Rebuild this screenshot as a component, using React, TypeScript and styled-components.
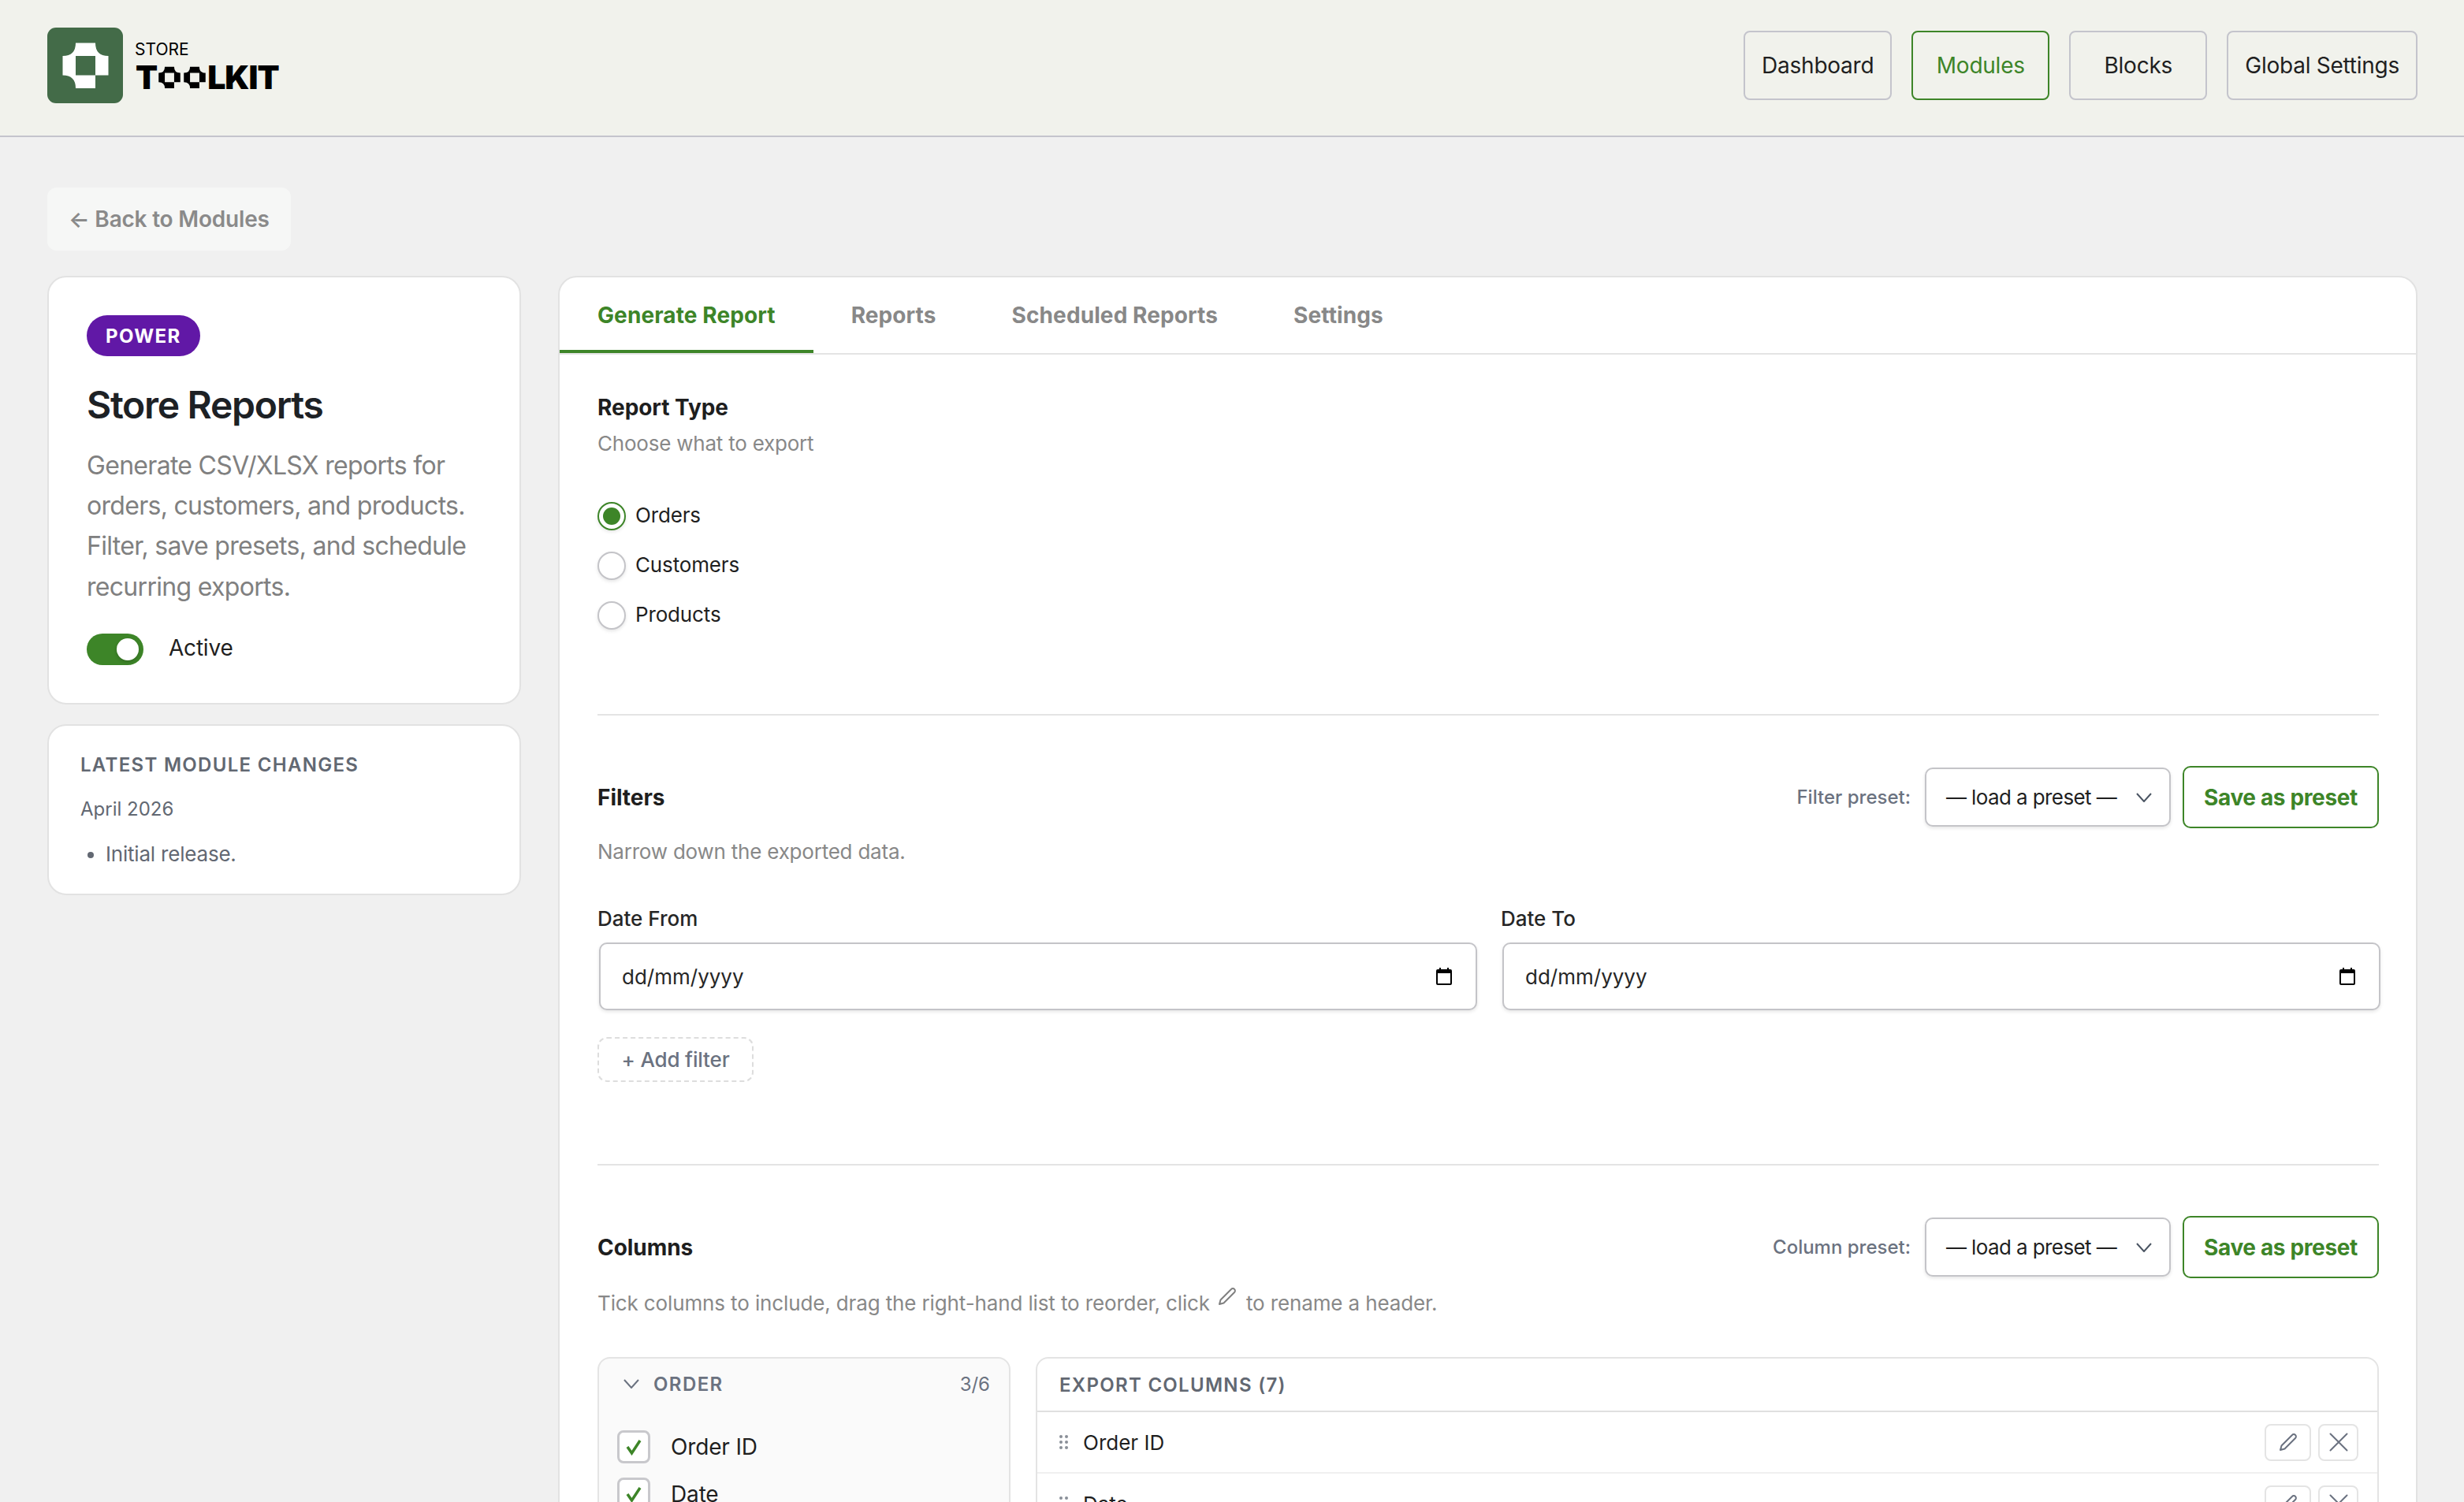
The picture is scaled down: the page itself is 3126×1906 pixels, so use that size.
import React, { FC } from 'react'
import styled, { createGlobalStyle } from 'styled-components'

const GREEN = '#3d8528'
const MARK = 'M36 19.5H61Q61 36 77.5 36V60.5H61V77H36Q36 60.5 19.5 60.5V36Q36 36 36 19.5ZM36 36V60.5H61V36Z'

const GlobalStyle = createGlobalStyle`
  html, body {
    margin: 0;
    height: 1906px;
    overflow: hidden;
    background: #f0f0f0;
    font-family: Inter, "Liberation Sans", sans-serif;
    color: #1f1f1f;
  }
  * { box-sizing: border-box; }
`

const Header = styled.header`
  display: flex;
  align-items: center;
  justify-content: space-between;
  height: 174px;
  padding: 0 59px 6px 60px;
  background: #f1f2ec;
  border-bottom: 2px solid #c4c4cc;
`
const Logo = styled.div`
  display: flex;
  align-items: center;
  gap: 16px;
`
const LogoWords = styled.div`
  display: flex;
  flex-direction: column;
  gap: 3px;
  color: #000;
`
const LogoStore = styled.span`
  font-size: 21px;
  line-height: 26px;
  margin-left: -1px;
`
const LogoToolkit = styled.span`
  display: flex;
  align-items: center;
  font-size: 41px;
  line-height: 38px;
  height: 38px;
  font-weight: 900;
  letter-spacing: -1px;
`
const WordO = styled.span`
  position: relative;
  display: inline-block;
  width: 32px;
  font-size: 30px;
  color: transparent;
  svg {
    position: absolute;
    top: 5px;
    left: 2px;
  }
`
const Nav = styled.nav`
  display: flex;
  gap: 25px;
`
const NavButton = styled.button<{ $active?: boolean }>`
  height: 88px;
  min-width: 175px;
  padding: 0 21px;
  background: transparent;
  border: 2px solid ${({ $active }) => ($active ? GREEN : '#c4c4cc')};
  border-radius: 8px;
  font: 400 28px Inter, sans-serif;
  letter-spacing: -0.25px;
  color: ${({ $active }) => ($active ? GREEN : '#1f1f1f')};
`
const Page = styled.main`
  padding: 64px 59px 0 60px;
`
const BackLink = styled.a`
  display: inline-flex;
  align-items: center;
  height: 80px;
  padding: 0 27px;
  margin-bottom: 32px;
  background: #f6f7f6;
  border-radius: 12px;
  font-size: 28px;
  font-weight: 600;
  letter-spacing: -0.2px;
  color: #8a8a8a;
`
const Columns = styled.div`
  display: grid;
  grid-template-columns: 601px 1fr;
  gap: 47px;
  align-items: start;
`
const Side = styled.aside`
  display: flex;
  flex-direction: column;
  gap: 25px;
`
const Card = styled.section`
  background: #fff;
  border: 2px solid #e2e2e2;
  border-radius: 24px;
`
const ModuleCard = styled(Card)`
  padding: 48px 48px 48px;
`
const Badge = styled.span`
  display: inline-flex;
  align-items: center;
  height: 52px;
  padding: 0 24px;
  border-radius: 26px;
  background: #6118a6;
  color: #fff;
  font-size: 24px;
  font-weight: 700;
  letter-spacing: 1.4px;
`
const Title = styled.h1`
  margin: 32px 0 21px;
  font-size: 48px;
  line-height: 60px;
  font-weight: 600;
  letter-spacing: -1.3px;
  color: #1d2125;
`
const Description = styled.p`
  margin: 0 0 34px;
  font-size: 32px;
  line-height: 51.2px;
  letter-spacing: -0.7px;
  color: #808080;
`
const ToggleRow = styled.div`
  display: flex;
  align-items: center;
  gap: 32px;
  font-size: 28px;
  letter-spacing: -0.2px;
  color: #1f1f1f;
`
const Toggle = styled.span`
  display: flex;
  align-items: center;
  justify-content: flex-end;
  width: 72px;
  height: 40px;
  padding-right: 6px;
  border-radius: 20px;
  background: ${GREEN};
`
const Knob = styled.span`
  width: 28px;
  height: 28px;
  border-radius: 50%;
  background: #fff;
  box-shadow: 0 2px 4px rgba(0, 0, 0, 0.2);
`
// labels next to a round control sit a little above its centre
const LiftedLabel = styled.span`
  margin-bottom: 3px;
`
const ChangesCard = styled(Card)`
  padding: 34px 40px 34px;
  color: #626872;
`
const ChangesTitle = styled.h2`
  margin: 0 0 24px;
  font-size: 24px;
  line-height: 32px;
  font-weight: 600;
  letter-spacing: 1.3px;
  text-transform: uppercase;
`
const ChangesDate = styled.div`
  margin-bottom: 25px;
  font-size: 24px;
  line-height: 32px;
`
const ChangesList = styled.ul`
  margin: 0;
  padding-left: 32px;
  font-size: 26px;
  line-height: 32px;
  letter-spacing: -0.2px;
`
const Main = styled(Card)`
  border-radius: 24px;
  min-height: 1700px;
`
const Tabs = styled.div`
  display: flex;
  height: 98px;
  border-bottom: 2px solid #e4e4e4;
`
const Tab = styled.div<{ $active?: boolean }>`
  display: flex;
  align-items: center;
  height: 96px;
  padding: 4px 48px 0;
  border-bottom: 4px solid ${({ $active }) => ($active ? GREEN : 'transparent')};
  font-size: 28px;
  font-weight: 700;
  letter-spacing: 0.1px;
  color: ${({ $active }) => ($active ? GREEN : '#888')};
`
const Body = styled.div`
  padding: 47px 47px 0 48px;
`
const SectionTitle = styled.h3`
  margin: 0;
  font-size: 28px;
  line-height: 40px;
  font-weight: 700;
  letter-spacing: -0.05px;
  color: #1e1e1e;
`
const Hint = styled.p<{ $top: number }>`
  margin: ${({ $top }) => $top}px 0 0;
  font-size: 26px;
  line-height: 36px;
  letter-spacing: -0.22px;
  color: #888;
`
const ColumnsHint = styled(Hint)`
  letter-spacing: -0.13px;
`
const RadioGroup = styled.div`
  display: flex;
  flex-direction: column;
  gap: 27px;
  margin-top: 56px;
`
const RadioRow = styled.label`
  display: flex;
  align-items: center;
  gap: 12px;
  height: 36px;
  font-size: 26px;
  letter-spacing: -0.15px;
  color: #1f1f1f;
`
const RadioDot = styled.span<{ $on?: boolean }>`
  display: flex;
  align-items: center;
  justify-content: center;
  width: 36px;
  height: 36px;
  border-radius: 50%;
  background: #fff;
  border: 2px solid ${({ $on }) => ($on ? GREEN : '#c4c4c8')};
  box-shadow: 0 2px 4px rgba(0, 0, 0, 0.1);
  &::after {
    content: '';
    display: ${({ $on }) => ($on ? 'block' : 'none')};
    width: 22px;
    height: 22px;
    border-radius: 50%;
    background: ${GREEN};
  }
`
const Divider = styled.hr<{ $top: number }>`
  margin: ${({ $top }) => $top}px 0 64px;
  border: 0;
  border-top: 2px solid #e4e4e4;
`
const SectionHead = styled.div`
  display: flex;
  align-items: center;
  justify-content: space-between;
`
const PresetControls = styled.div`
  display: flex;
  align-items: center;
`
const PresetLabel = styled.span`
  margin-right: 18px;
  font-size: 24px;
  font-weight: 500;
  color: #6b7280;
`
const PresetSelect = styled.div`
  display: flex;
  align-items: center;
  justify-content: space-between;
  width: 312px;
  height: 75px;
  padding: 0 22px 0 25px;
  margin-right: 15px;
  background: #fff;
  border: 2px solid #c4c4c8;
  border-radius: 10px;
  box-shadow: 0 2px 4px rgba(0, 0, 0, 0.1);
  font-size: 26px;
  letter-spacing: -0.6px;
  color: #1f1f1f;
`
const SaveButton = styled.button`
  width: 249px;
  height: 79px;
  background: #fff;
  border: 2px solid ${GREEN};
  border-radius: 10px;
  font: 700 28px Inter, sans-serif;
  letter-spacing: -0.35px;
  color: ${GREEN};
`
const DateGrid = styled.div`
  display: grid;
  grid-template-columns: 1fr 1fr;
  gap: 32px;
  margin-top: 51px;
`
const FieldLabel = styled.label`
  display: block;
  margin-bottom: 14px;
  font-size: 26px;
  line-height: 32px;
  font-weight: 500;
  color: #262626;
`
const DateInput = styled.div`
  display: flex;
  align-items: center;
  justify-content: space-between;
  height: 86px;
  padding: 0 30px 0 27px;
  margin: 0 -2px 0 2px;
  background: #fff;
  border: 2px solid #c4c4c8;
  border-radius: 10px;
  box-shadow: 0 2px 4px rgba(0, 0, 0, 0.1);
  font-size: 26px;
  color: #262626;
`
const AddFilter = styled.button`
  display: block;
  width: 198px;
  height: 57px;
  margin-top: 34px;
  background: #fff;
  border: 2px dashed #ddd;
  border-radius: 12px;
  font: 500 26px Inter, sans-serif;
  letter-spacing: -0.15px;
  color: #6b7280;
`
const InlinePencil = styled.svg`
  margin: 0 11px 0 9px;
  vertical-align: -4px;
  transform: translateY(-10px);
`
const PickerGrid = styled.div`
  display: grid;
  grid-template-columns: 524px 1fr;
  gap: 32px;
  margin-top: 50px;
`
const PickerPanel = styled.div`
  height: 400px;
  padding: 0 24px 0 23px;
  background: #fafafa;
  border: 2px solid #e4e4e4;
  border-radius: 16px;
`
const PickerHead = styled.div`
  display: flex;
  align-items: center;
  height: 64px;
  padding-left: 8px;
  margin-bottom: 27px;
  font-size: 24px;
  color: #6b7280;
`
const PickerTitle = styled.span`
  flex: 1;
  margin-left: 18px;
  font-weight: 600;
  letter-spacing: 1.4px;
`
const CheckRows = styled.div`
  display: flex;
  flex-direction: column;
  gap: 18px;
`
const CheckRow = styled.label`
  display: flex;
  align-items: center;
  gap: 26px;
  font-size: 28px;
  letter-spacing: -0.15px;
  color: #1f1f1f;
`
const CheckBox = styled.span`
  display: flex;
  align-items: center;
  justify-content: center;
  width: 42px;
  height: 42px;
  background: #fff;
  border: 3px solid #c8c8cc;
  border-radius: 8px;
`
const ExportPanel = styled.div`
  height: 400px;
  background: #fff;
  border: 2px solid #e4e4e4;
  border-radius: 16px;
`
const ExportHead = styled.div`
  display: flex;
  align-items: center;
  height: 68px;
  padding-left: 28px;
  border-bottom: 2px solid #e0e0e0;
  font-size: 24px;
  font-weight: 600;
  letter-spacing: 1.3px;
  color: #626872;
`
const ExportRow = styled.div`
  display: flex;
  align-items: center;
  height: 78px;
  padding: 0 24px 0 28px;
  border-bottom: 2px solid #f0f0f0;
  font-size: 26px;
  color: #1f1f1f;
`
const ExportName = styled.span`
  flex: 1;
  margin-left: 19px;
`
const RowActions = styled.div`
  display: flex;
  gap: 9px;
`
const IconButton = styled.button<{ $width: number }>`
  display: flex;
  align-items: center;
  justify-content: center;
  width: ${({ $width }) => $width}px;
  height: 47px;
  padding: 0;
  background: #fff;
  border: 2px solid #e4e4e4;
  border-radius: 8px;
  color: #6b7280;
`

const PencilIcon: FC<{ size?: number }> = ({ size = 24 }) => (
  <svg width={size} height={size} viewBox="0 0 24 24" fill="none" stroke="currentColor" strokeWidth="2" strokeLinejoin="round">
    <path d="M17 3a2.83 2.83 0 1 1 4 4L7.5 20.5 2 22l1.5-5.5L17 3z" />
  </svg>
)

const CloseIcon = () => (
  <svg width="24" height="24" viewBox="0 0 24 24" fill="none" stroke="currentColor" strokeWidth="2" strokeLinecap="round">
    <path d="M1.5 1.5l21 21M22.5 1.5l-21 21" />
  </svg>
)

const Chevron: FC<{ color?: string; width?: number }> = ({ color = '#4b5563', width = 20 }) => (
  <svg width={width} height={(width * 12) / 20} viewBox="0 0 20 12" fill="none" stroke={color} strokeWidth="2">
    <path d="M1 1l9 10 9-10" />
  </svg>
)

const CalendarIcon = () => (
  <svg width="20" height="22" viewBox="0 0 20 22">
    <path fill="#000" d="M4 0h2v2h8V0h2v2h2a2 2 0 0 1 2 2v16a2 2 0 0 1-2 2H2a2 2 0 0 1-2-2V4a2 2 0 0 1 2-2h2zM2 7v13h16V7z" />
  </svg>
)

const DragHandle = () => (
  <svg width="11" height="18" viewBox="0 0 11 18" fill="#8a8f98">
    <circle cx="2" cy="2" r="2" />
    <circle cx="9" cy="2" r="2" />
    <circle cx="2" cy="9" r="2" />
    <circle cx="9" cy="9" r="2" />
    <circle cx="2" cy="16" r="2" />
    <circle cx="9" cy="16" r="2" />
  </svg>
)

const CheckMark = () => (
  <svg width="22" height="22" viewBox="0 0 22 22" fill="none" stroke={GREEN} strokeWidth="3.5">
    <path d="M3 11l5.5 8L19 3" />
  </svg>
)

const ToolkitO = () => (
  <WordO>
    O
    <svg width="28" height="29" viewBox="19 19 59 59">
      <path fill="#000" fillRule="evenodd" d={MARK} />
    </svg>
  </WordO>
)

const PresetRow: FC<{ label: string }> = ({ label }) => (
  <PresetControls>
    <PresetLabel>{label}</PresetLabel>
    <PresetSelect>
      — load a preset —
      <Chevron />
    </PresetSelect>
    <SaveButton>Save as preset</SaveButton>
  </PresetControls>
)

const ExportItem: FC<{ name: string }> = ({ name }) => (
  <ExportRow>
    <DragHandle />
    <ExportName>{name}</ExportName>
    <RowActions>
      <IconButton $width={59}>
        <PencilIcon />
      </IconButton>
      <IconButton $width={51}>
        <CloseIcon />
      </IconButton>
    </RowActions>
  </ExportRow>
)

export default function App() {
  return (
    <>
      <GlobalStyle />
      <Header>
        <Logo>
          <svg width="96" height="96" viewBox="0 0 96 96">
            <rect width="96" height="96" rx="11" fill="#436b48" />
            <path fill="#fff" fillRule="evenodd" d={MARK} />
          </svg>
          <LogoWords>
            <LogoStore>STORE</LogoStore>
            <LogoToolkit>
              T<ToolkitO />
              <ToolkitO />
              LKIT
            </LogoToolkit>
          </LogoWords>
        </Logo>
        <Nav>
          <NavButton>Dashboard</NavButton>
          <NavButton $active>Modules</NavButton>
          <NavButton>Blocks</NavButton>
          <NavButton>Global Settings</NavButton>
        </Nav>
      </Header>
      <Page>
        <BackLink>← Back to Modules</BackLink>
        <Columns>
          <Side>
            <ModuleCard>
              <Badge>POWER</Badge>
              <Title>Store Reports</Title>
              <Description>
                Generate CSV/XLSX reports for orders, customers, and products. Filter, save presets, and schedule recurring exports.
              </Description>
              <ToggleRow>
                <Toggle>
                  <Knob />
                </Toggle>
                <LiftedLabel>Active</LiftedLabel>
              </ToggleRow>
            </ModuleCard>
            <ChangesCard>
              <ChangesTitle>Latest module changes</ChangesTitle>
              <ChangesDate>April 2026</ChangesDate>
              <ChangesList>
                <li>Initial release.</li>
              </ChangesList>
            </ChangesCard>
          </Side>
          <Main>
            <Tabs>
              <Tab $active>Generate Report</Tab>
              <Tab>Reports</Tab>
              <Tab>Scheduled Reports</Tab>
              <Tab>Settings</Tab>
            </Tabs>
            <Body>
              <SectionTitle>Report Type</SectionTitle>
              <Hint $top={8}>Choose what to export</Hint>
              <RadioGroup>
                <RadioRow>
                  <RadioDot $on />
                  <LiftedLabel>Orders</LiftedLabel>
                </RadioRow>
                <RadioRow>
                  <RadioDot />
                  <LiftedLabel>Customers</LiftedLabel>
                </RadioRow>
                <RadioRow>
                  <RadioDot />
                  <LiftedLabel>Products</LiftedLabel>
                </RadioRow>
              </RadioGroup>
              <Divider $top={107} />
              <SectionHead>
                <SectionTitle>Filters</SectionTitle>
                <PresetRow label="Filter preset:" />
              </SectionHead>
              <Hint $top={12}>Narrow down the exported data.</Hint>
              <DateGrid>
                <div>
                  <FieldLabel>Date From</FieldLabel>
                  <DateInput>
                    dd/mm/yyyy
                    <CalendarIcon />
                  </DateInput>
                </div>
                <div>
                  <FieldLabel>Date To</FieldLabel>
                  <DateInput>
                    dd/mm/yyyy
                    <CalendarIcon />
                  </DateInput>
                </div>
              </DateGrid>
              <AddFilter>+ Add filter</AddFilter>
              <Divider $top={104} />
              <SectionHead>
                <SectionTitle>Columns</SectionTitle>
                <PresetRow label="Column preset:" />
              </SectionHead>
              <ColumnsHint $top={14}>
                Tick columns to include, drag the right-hand list to reorder, click
                <InlinePencil width="26" height="24" viewBox="0 0 24 24" fill="none" stroke="#808080" strokeWidth="2" strokeLinejoin="round">
                  <path d="M17 3a2.83 2.83 0 1 1 4 4L7.5 20.5 2 22l1.5-5.5L17 3z" />
                </InlinePencil>
                to rename a header.
              </ColumnsHint>
              <PickerGrid>
                <PickerPanel>
                  <PickerHead>
                    <Chevron color="#6b7280" />
                    <PickerTitle>ORDER</PickerTitle>
                    <span>3/6</span>
                  </PickerHead>
                  <CheckRows>
                    <CheckRow>
                      <CheckBox>
                        <CheckMark />
                      </CheckBox>
                      Order ID
                    </CheckRow>
                    <CheckRow>
                      <CheckBox>
                        <CheckMark />
                      </CheckBox>
                      Date
                    </CheckRow>
                  </CheckRows>
                </PickerPanel>
                <ExportPanel>
                  <ExportHead>EXPORT COLUMNS (7)</ExportHead>
                  <ExportItem name="Order ID" />
                  <ExportItem name="Date" />
                </ExportPanel>
              </PickerGrid>
            </Body>
          </Main>
        </Columns>
      </Page>
    </>
  )
}
